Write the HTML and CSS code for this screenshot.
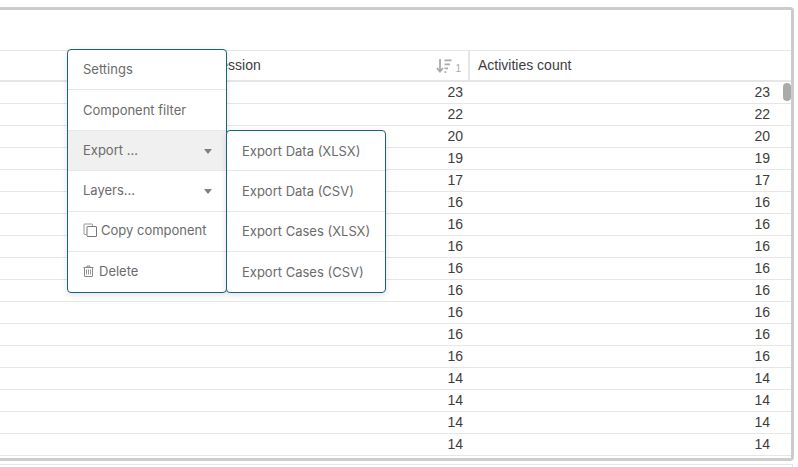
FILE: index.html
```html
<!DOCTYPE html>
<html>
<head>
  <meta charset="utf-8" />
  <title>Table component</title>
  <link rel="stylesheet" href="styles.css">
</head>
<body>
  <div class="panel">
    <div class="panel-top"></div>

    <div class="row head">
      <div class="cell first"></div>
      <div class="cell sorted">
        <span>Session</span>
        <span class="sort">
          <svg width="16" height="16" viewBox="0 0 16 16">
            <path d="M4 1v12M1 10l3 3.600L7 10" fill="none" stroke="#aaa" stroke-width="1.800"/>
            <path d="M8.500 1.500h7v1.800h-7zM8.500 5.500h5.500v1.800h-5.500zM8.500 9.500h3.500v1.800h-3.500zM8.500 13.300h1.800v1.800h-1.800z" fill="#aaa"/>
          </svg>
          <i>1</i>
        </span>
      </div>
      <div class="cell last">Activities count</div>
    </div>

    <div class="row"><div class="cell first"></div><div class="cell num">23</div><div class="cell last num">23</div></div>
    <div class="row"><div class="cell first"></div><div class="cell num">22</div><div class="cell last num">22</div></div>
    <div class="row"><div class="cell first"></div><div class="cell num">20</div><div class="cell last num">20</div></div>
    <div class="row"><div class="cell first"></div><div class="cell num">19</div><div class="cell last num">19</div></div>
    <div class="row"><div class="cell first"></div><div class="cell num">17</div><div class="cell last num">17</div></div>
    <div class="row"><div class="cell first"></div><div class="cell num">16</div><div class="cell last num">16</div></div>
    <div class="row"><div class="cell first"></div><div class="cell num">16</div><div class="cell last num">16</div></div>
    <div class="row"><div class="cell first"></div><div class="cell num">16</div><div class="cell last num">16</div></div>
    <div class="row"><div class="cell first"></div><div class="cell num">16</div><div class="cell last num">16</div></div>
    <div class="row"><div class="cell first"></div><div class="cell num">16</div><div class="cell last num">16</div></div>
    <div class="row"><div class="cell first"></div><div class="cell num">16</div><div class="cell last num">16</div></div>
    <div class="row"><div class="cell first"></div><div class="cell num">16</div><div class="cell last num">16</div></div>
    <div class="row"><div class="cell first"></div><div class="cell num">16</div><div class="cell last num">16</div></div>
    <div class="row"><div class="cell first"></div><div class="cell num">14</div><div class="cell last num">14</div></div>
    <div class="row"><div class="cell first"></div><div class="cell num">14</div><div class="cell last num">14</div></div>
    <div class="row"><div class="cell first"></div><div class="cell num">14</div><div class="cell last num">14</div></div>
    <div class="row"><div class="cell first"></div><div class="cell num">14</div><div class="cell last num">14</div></div>

    <div class="scroll-thumb"></div>
  </div>
  <div class="next-panel"></div>

  <ul class="menu main-menu">
    <li>Settings</li>
    <li class="level">Component filter</li>
    <li class="level active has-sub">Export ...</li>
    <li class="has-sub">Layers...</li>
    <li class="copy">
      <svg class="copy-icon" width="14" height="14" viewBox="0 0 14 14">
        <path d="M3.500 11.500H1.500a.5.5 0 0 1-.5-.5V1.500a.5.5 0 0 1 .5-.5H9a.5.5 0 0 1 .5.500v1.500" fill="none" stroke="#999"/>
        <rect x="4" y="3.500" width="9.500" height="10" rx=".5" fill="none" stroke="#777"/>
      </svg>
      Copy component
    </li>
    <li class="delete">
      <svg class="trash-icon" width="11" height="12" viewBox="0 0 11 12">
        <path d="M.5 2.500h10M4 2.500V1h3v1.500" fill="none" stroke="#888"/>
        <path d="M1.500 2.500h8V11a.5.5 0 0 1-.5.500H2a.5.5 0 0 1-.5-.5z" fill="none" stroke="#888"/>
        <path d="M3.500 4.500v5M5.500 4.500v5M7.500 4.500v5" fill="none" stroke="#999"/>
      </svg>
      Delete
    </li>
  </ul>

  <ul class="menu sub-menu">
    <li>Export Data (XLSX)</li>
    <li>Export Data (CSV)</li>
    <li>Export Cases (XLSX)</li>
    <li>Export Cases (CSV)</li>
  </ul>
</body>
</html>
```

FILE: styles.css
```css
html, body {
  margin: 0;
  padding: 0;
  height: 100%;
  overflow: hidden;
  background: #fff;
}

body {
  padding-top: 7px;
  box-sizing: border-box;
  font-family: "Liberation Sans", Arial, sans-serif;
  font-size: 14px;
  color: #3d3d3d;
}

.panel {
  position: relative;
  box-sizing: border-box;
  width: 794px;
  height: 454px;
  border: 3px solid #ccc;
  border-left: none;
  border-radius: 0 4px 4px 0;
  overflow: hidden;
}

.panel-top {
  height: 40px;
}

.row {
  display: grid;
  grid-template-columns: 202px 268px 1fr;
  height: 22px;
  box-sizing: border-box;
  border-bottom: 1px solid #e6e6e6;
  line-height: 21px;
}

.head {
  height: 32px;
  border-top: 1px solid #e6e6e6;
  border-bottom: 2px solid #e6e6e6;
  line-height: 28px;
}

.cell {
  padding: 0 8px;
  min-width: 0;
}

.num {
  text-align: right;
  padding-right: 7px;
}

.last.num {
  padding-right: 21px;
}

.head .cell {
  padding-left: 9px;
}

.head .last {
  padding-left: 8px;
}

.sorted {
  display: flex;
  justify-content: space-between;
  align-items: flex-start;
  border-right: 2px solid #e6e6e6;
  padding-right: 7px;
}

.sort {
  align-self: center;
  display: flex;
  align-items: flex-end;
  gap: 3px;
}

.sort i {
  font-style: normal;
  font-size: 10px;
  line-height: 11px;
  color: #aaa;
}

.scroll-thumb {
  position: absolute;
  top: 73px;
  right: 0;
  width: 8px;
  height: 18px;
  border-radius: 4px;
  background: #aaa;
}

.next-panel {
  height: 8px;
  margin-top: 3px;
  width: 793px;
  box-sizing: border-box;
  border-top: 1px solid #e6e6e6;
  border-right: 1px solid #e6e6e6;
}

.menu {
  position: absolute;
  margin: 0;
  padding: 0;
  list-style: none;
  width: 160px;
  box-sizing: border-box;
  background: #fff;
  border: 1px solid #17657d;
  border-radius: 4px;
  box-shadow: 0 2px 6px rgba(0, 0, 0, 0.12);
  font-family: Inter, "Liberation Sans", sans-serif;
  font-size: 13px;
  color: #6b6b6b;
}

.main-menu {
  left: 67px;
  top: 49px;
}

.sub-menu {
  left: 226px;
  top: 130px;
}

.menu li {
  position: relative;
  display: flex;
  align-items: center;
  gap: 4px;
  height: 40.4px;
  padding: 0 15px;
  box-sizing: border-box;
  border-bottom: 1px solid #e3e8ee;
  white-space: nowrap;
}

.main-menu li {
  padding-bottom: 1px;
}

.main-menu .level {
  padding-bottom: 0;
}

.main-menu .copy {
  padding-bottom: 2px;
}

.menu li:last-child {
  height: 39.6px;
  border-bottom: none;
}

.main-menu li:last-child {
  padding-bottom: 1px;
}

.sub-menu li:last-child {
  padding-top: 1px;
}

.menu .delete {
  gap: 5px;
}

.menu .active {
  background: #f0f0f0;
}

.has-sub::after {
  content: "";
  position: absolute;
  right: 14px;
  top: 18px;
  border: 4.500px solid transparent;
  border-top: 5px solid #808080;
  border-bottom: none;
}

.copy-icon, .trash-icon {
  flex: none;
}
```
